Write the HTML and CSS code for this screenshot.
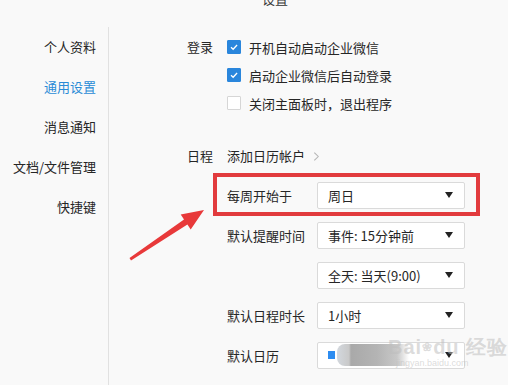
FILE: index.html
```html
<!DOCTYPE html>
<html lang="zh">
<head>
<meta charset="utf-8">
<link rel="stylesheet" href="styles.css">
</head>
<body>
<div class="app">
  <header class="header"><div class="title">设置</div></header>
  <div class="body">
    <nav class="nav">
      <div class="nav-item">个人资料</div>
      <div class="nav-item active">通用设置</div>
      <div class="nav-item">消息通知</div>
      <div class="nav-item">文档/文件管理</div>
      <div class="nav-item">快捷键</div>
    </nav>
    <main class="main">
      <section class="group login">
        <div class="glabel">登录</div>
        <div class="opts">
          <div class="check-row"><span class="box on"><svg viewBox="0 0 14 14"><path d="M3.5 7.2 L6 9.6 L10.6 4.6" fill="none" stroke="#fff" stroke-width="1.5"/></svg></span>开机自动启动企业微信</div>
          <div class="check-row"><span class="box on"><svg viewBox="0 0 14 14"><path d="M3.5 7.2 L6 9.6 L10.6 4.6" fill="none" stroke="#fff" stroke-width="1.5"/></svg></span>启动企业微信后自动登录</div>
          <div class="check-row"><span class="box"></span>关闭主面板时，退出程序</div>
        </div>
      </section>
      <section class="group sched">
        <div class="glabel">日程</div>
        <div class="sched-body">
          <div class="link">添加日历帐户<svg class="chev" viewBox="0 0 8 12"><path d="M1.5 1.5 L6 6 L1.5 10.5" fill="none" stroke="#b5b5b5" stroke-width="1.2"/></svg></div>
        </div>
      </section>
      <div class="rows">
        <div class="row hl">
          <div class="rlabel">每周开始于</div>
          <div class="select"><span class="val">周日</span><span class="caret"></span></div>
        </div>
        <div class="row">
          <div class="rlabel">默认提醒时间</div>
          <div class="select"><span class="val">事件: 15分钟前</span><span class="caret"></span></div>
        </div>
        <div class="row">
          <div class="rlabel"></div>
          <div class="select"><span class="val">全天: 当天(9:00)</span><span class="caret"></span></div>
        </div>
        <div class="row">
          <div class="rlabel">默认日程时长</div>
          <div class="select"><span class="val">1小时</span><span class="caret"></span></div>
        </div>
        <div class="row">
          <div class="rlabel">默认日历</div>
          <div class="select"><span class="val cal"><span class="dot"></span><span class="blur"></span></span><span class="caret"></span></div>
        </div>
      </div>
    </main>
  </div>
  <svg class="arrow" viewBox="0 0 508 385" width="508" height="385">
    <polygon points="129.5,258 184,219.6 180.7,214.6 204,210 190.7,229.6 187.4,224.6 131,260.5" fill="#e8393a"/>
  </svg>
  <div class="watermark"><span class="wm-big">Bai<span class="paw">❀</span>du 经验</span><span class="wm-small">jingyan.baidu.com</span></div>
</div>
</body>
</html>
```
FILE: styles.css
```css
html, body {
  margin: 0;
  padding: 0;
  background: #f9f9f9;
}
body {
  width: 508px;
  height: 385px;
  overflow: hidden;
  font-family: "Noto Sans CJK SC", "Noto Sans", sans-serif;
  font-size: 13px;
  color: #262626;
}
.app {
  position: relative;
  width: 508px;
  height: 385px;
  overflow: hidden;
}
.header {
  height: 27px;
  display: flow-root;
}
.title {
  line-height: 20px;
  margin-top: -11px;
  padding-left: 262px;
  font-size: 13px;
  color: #333;
}
.body {
  display: flex;
  height: 358px;
}
.nav {
  width: 96px;
  padding-right: 12px;
  border-right: 1px solid #e1e1e1;
  display: flex;
  flex-direction: column;
  align-items: flex-end;
}
.nav-item {
  line-height: 40px;
  height: 40px;
  white-space: nowrap;
}
.nav-item.active {
  color: #2a8bd6;
}
.main {
  flex: 1;
  padding-left: 78px;
  padding-top: 6px;
}
.group {
  display: flex;
}
.glabel {
  width: 40px;
  line-height: 28px;
  height: 28px;
}
.opts {
  display: flex;
  flex-direction: column;
}
.check-row {
  display: flex;
  align-items: center;
  height: 28px;
  gap: 8px;
}
.box {
  width: 14px;
  height: 14px;
  box-sizing: border-box;
  border: 1px solid #d6d6d6;
  background: #fff;
  border-radius: 1px;
  display: flex;
}
.box.on {
  background: #2a86dc;
  border-color: #2a86dc;
}
.box svg {
  width: 12px;
  height: 12px;
}
.sched {
  margin-top: 25px;
}
.link {
  display: flex;
  align-items: center;
  line-height: 28px;
  height: 28px;
  gap: 8px;
}
.chev {
  width: 7px;
  height: 11px;
}
.rows {
  margin-top: 5px;
  padding-left: 40px;
  display: flex;
  flex-direction: column;
}
.row {
  position: relative;
  display: flex;
  align-items: center;
  height: 40px;
  width: 238px;
}
.row.hl::after {
  content: "";
  position: absolute;
  left: -14px;
  right: -15px;
  top: -2px;
  bottom: -1px;
  border: 4px solid #e23b3e;
}
.rlabel {
  width: 90px;
  white-space: nowrap;
}
.select {
  width: 148px;
  height: 27px;
  box-sizing: border-box;
  border: 1px solid #dadada;
  border-radius: 2px;
  background: #fff;
  display: flex;
  align-items: center;
  justify-content: space-between;
  padding: 0 10px;
}
.val {
  white-space: nowrap;
}
.caret {
  width: 0;
  height: 0;
  border-left: 4px solid transparent;
  border-right: 4px solid transparent;
  border-top: 6px solid #222;
  margin-right: 1px;
}
.cal {
  display: flex;
  align-items: center;
}
.dot {
  width: 7px;
  height: 8px;
  background: #2d8cf0;
}
.blur {
  width: 72px;
  height: 22px;
  margin-left: 2px;
  border-radius: 8px 0 0 8px;
  background: linear-gradient(90deg, #d3d8de 0, #c9c9c9 12px, #a9a9a9 14px, #b4b4b4 40px, #c8c8c8 60px, rgba(220,220,220,0) 72px);
}
.arrow {
  position: absolute;
  left: 0;
  top: 0;
  pointer-events: none;
}
.watermark {
  position: absolute;
  left: 388px;
  top: 336px;
  display: flex;
  flex-direction: column;
  color: rgba(190,190,190,0.55);
  font-family: "Liberation Sans", sans-serif;
  white-space: nowrap;
  pointer-events: none;
}
.wm-big {
  font-size: 20px;
  font-weight: bold;
  line-height: 22px;
  letter-spacing: 1px;
}
.paw {
  font-size: 12px;
  vertical-align: top;
}
.wm-small {
  font-size: 9px;
  line-height: 11px;
  padding-left: 8px;
}
```
